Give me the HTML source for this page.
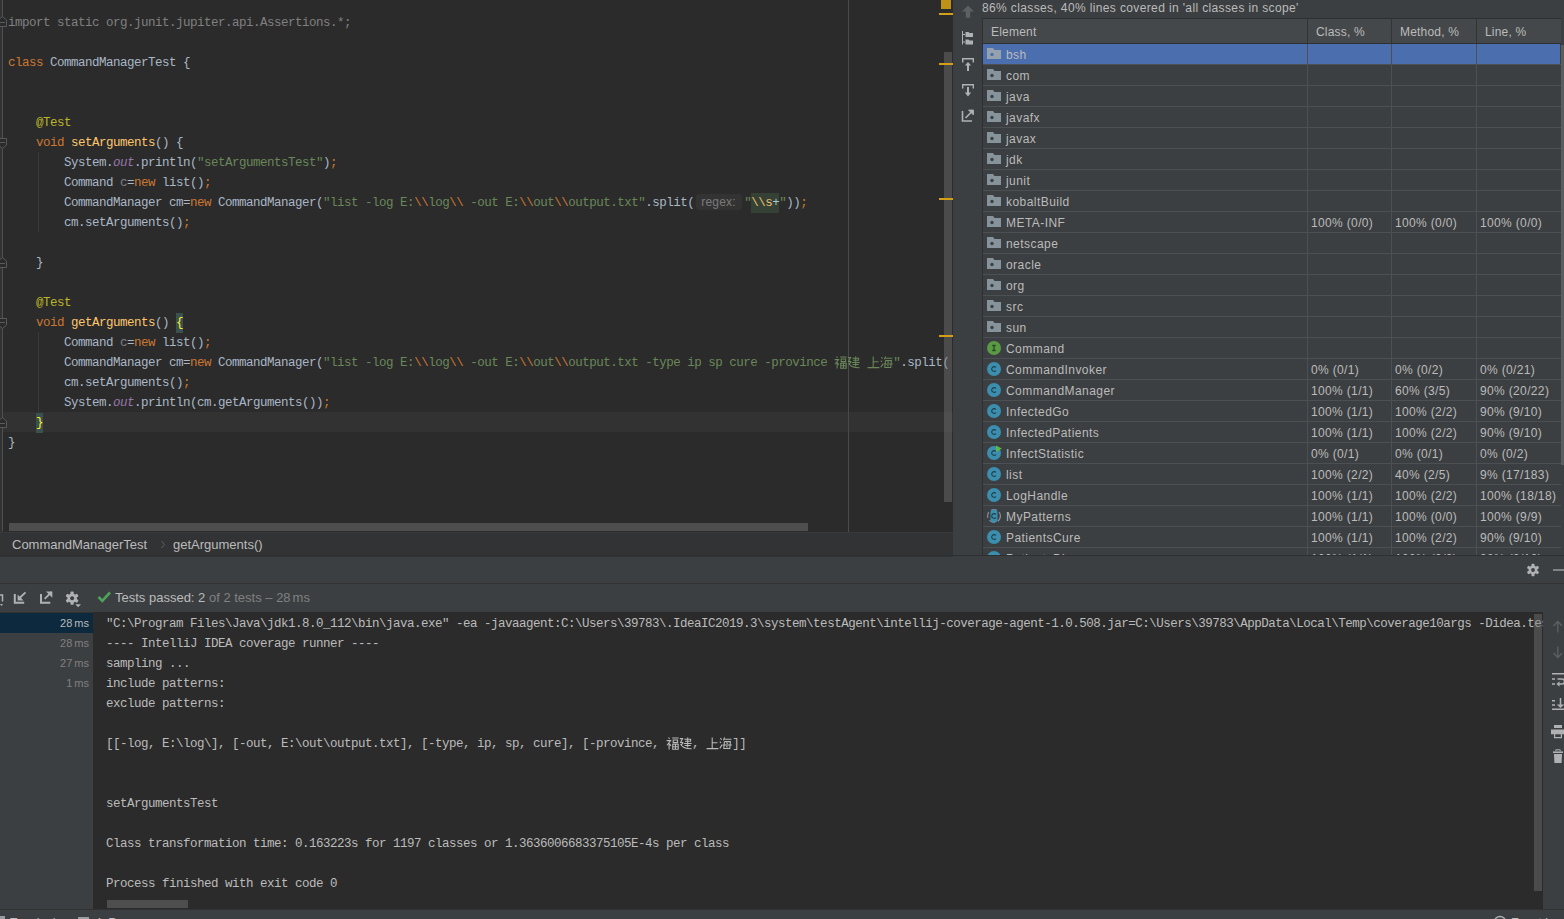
<!DOCTYPE html><html><head><meta charset="utf-8"><style>
*{margin:0;padding:0;box-sizing:border-box}
html,body{width:1564px;height:919px;overflow:hidden;background:#3C3F41;font-family:"Liberation Sans", sans-serif}
.abs{position:absolute}
.code{font-family:"Liberation Mono", monospace;font-size:12.5px;letter-spacing:-0.5px;line-height:20px;white-space:pre;color:#A9B7C6}
.ln{position:absolute;left:8px;height:20px}
.k{color:#CC7832} .s{color:#6A8759} .an{color:#BBB529} .fn{color:#FFC66D}
.st{color:#9876AA;font-style:italic} .gr{color:#808080} .uv{color:#808080}
.bm{background:#3B514D;color:#FFEF28;display:inline-block;height:20px;vertical-align:top}
.ui{font-family:"Liberation Sans", sans-serif;font-size:12px;line-height:14px;color:#BBBBBB;white-space:pre}
.num{letter-spacing:0.35px} .tb{letter-spacing:0.45px}
.cj{display:inline-block;width:13px;height:20px;vertical-align:top;position:relative}
.cj svg{position:absolute;left:0;top:3px}
.inl{display:inline-block;width:50px;height:20px;vertical-align:top;position:relative}
.inl b{position:absolute;left:2px;top:1px;width:46px;height:16px;border-radius:4px;background:#333333;font-weight:normal;font-family:"Liberation Sans", sans-serif;font-size:12px;line-height:16px;color:#7A7A7A;letter-spacing:0.2px;padding-left:5px}
.rx{background:#364135;display:inline-block;height:20px;vertical-align:top}
</style></head><body>
<div class="abs" style="left:0;top:0;width:953px;height:532px;background:#2B2B2B;overflow:hidden">
<div class="abs" style="left:0;top:0;width:3px;height:532px;background:#313335"></div>
<div class="abs" style="left:0;top:412px;width:953px;height:20px;background:#323232"></div>
<div class="abs" style="left:2px;top:0;width:1px;height:531px;background:#4F4F4F"></div>
<div class="abs" style="left:848px;top:0;width:1px;height:532px;background:#4A4A4A"></div>
<div class="abs" style="left:38px;top:152px;width:1px;height:80px;background:#393939"></div>
<div class="abs" style="left:38px;top:332px;width:1px;height:80px;background:#393939"></div>
<div class="ln code" style="top:13px"><span class="gr">import static org.junit.jupiter.api.Assertions.*;</span></div>
<div class="ln code" style="top:53px"><span class="k">class</span> CommandManagerTest {</div>
<div class="ln code" style="top:113px">    <span class="an">@Test</span></div>
<div class="ln code" style="top:133px">    <span class="k">void</span> <span class="fn">setArguments</span>() {</div>
<div class="ln code" style="top:153px">        System.<span class="st">out</span>.println(<span class="s">"setArgumentsTest"</span>)<span class="k">;</span></div>
<div class="ln code" style="top:173px">        Command <span class="uv">c</span>=<span class="k">new</span> list()<span class="k">;</span></div>
<div class="ln code" style="top:193px">        CommandManager cm=<span class="k">new</span> CommandManager(<span class="s">"list -log E:<span class="k">\\</span>log<span class="k">\\</span> -out E:<span class="k">\\</span>out<span class="k">\\</span>output.txt"</span>.split(<span class="inl"><b>regex:</b></span><span class="s">"</span><span class="rx"><span style="color:#E8BF6A">\\s</span><span style="color:#A9C7D6">+</span></span><span class="s">"</span>))<span class="k">;</span></div>
<div class="ln code" style="top:213px">        cm.setArguments()<span class="k">;</span></div>
<div class="ln code" style="top:253px">    }</div>
<div class="ln code" style="top:293px">    <span class="an">@Test</span></div>
<div class="ln code" style="top:313px">    <span class="k">void</span> <span class="fn">getArguments</span>() <span class="bm">{</span></div>
<div class="ln code" style="top:333px">        Command <span class="uv">c</span>=<span class="k">new</span> list()<span class="k">;</span></div>
<div class="ln code" style="top:353px">        CommandManager cm=<span class="k">new</span> CommandManager(<span class="s">"list -log E:<span class="k">\\</span>log<span class="k">\\</span> -out E:<span class="k">\\</span>out<span class="k">\\</span>output.txt -type ip sp cure -province <span class="cj"><svg width="13" height="13" viewBox="0 0 13 13"><path d="M2.5 0.5L3.6 1.8M0.6 3.6H4.6L1 8.2M3.1 5.8V12.6M3.6 7.2L5 8.8M6.2 1H12.6M7.2 3H11.6V5.6H7.2ZM6.7 7.2H12.2V12.2H6.7ZM9.45 7.2V12.2M6.7 9.7H12.2" fill="none" stroke="#6A8759" stroke-width="1.05"/></svg></span><span class="cj"><svg width="13" height="13" viewBox="0 0 13 13"><path d="M5.4 2.2H12.2M6 4.3H11.6V2.2M4.8 6.4H12.6M5.6 8.5H11.8M8.7 0.4V10.4M0.8 1.6H3.6L1.6 5.4H3.8L2.2 8.8M1.6 6.8Q3 11.6 12.6 11.8" fill="none" stroke="#6A8759" stroke-width="1.05"/></svg></span> <span class="cj"><svg width="13" height="13" viewBox="0 0 13 13"><path d="M6.2 0.6V11.6M6.2 5.8H11.4M0.6 11.6H12.4" fill="none" stroke="#6A8759" stroke-width="1.05"/></svg></span><span class="cj"><svg width="13" height="13" viewBox="0 0 13 13"><path d="M1.4 1.2L2.6 2.6M0.8 4.6L2 6M0.8 11.4L3.2 7.6M5.6 0.4L4.4 3.4M5 2.2H12.4M5.4 4.6H11.4L10.8 11.4H4.8L5.4 4.6M3.8 8H12.8M7.6 5.6L8.6 6.8M7.4 9L8.4 10.4" fill="none" stroke="#6A8759" stroke-width="1.05"/></svg></span>"</span>.split(</div>
<div class="ln code" style="top:373px">        cm.setArguments()<span class="k">;</span></div>
<div class="ln code" style="top:393px">        System.<span class="st">out</span>.println(cm.getArguments())<span class="k">;</span></div>
<div class="ln code" style="top:413px">    <span class="bm">}</span></div>
<div class="ln code" style="top:433px">}</div>
<svg class="abs" style="left:0;top:16px" width="9" height="12" viewBox="0 0 9 12"><path d="M-2 10.5H6.5V4L2.5 0.5L-2 4Z" fill="#2B2B2B" stroke="#5A5A5A" stroke-width="1"/><path d="M0 6.5H5" stroke="#5A5A5A" stroke-width="1"/></svg>
<svg class="abs" style="left:0;top:138px" width="9" height="12" viewBox="0 0 9 12"><path d="M-2 0.5H6.5V7L2.5 10.5L-2 7Z" fill="#2B2B2B" stroke="#5A5A5A" stroke-width="1"/><path d="M0 4.5H5" stroke="#5A5A5A" stroke-width="1"/></svg>
<svg class="abs" style="left:0;top:257px" width="9" height="12" viewBox="0 0 9 12"><path d="M-2 10.5H6.5V4L2.5 0.5L-2 4Z" fill="#2B2B2B" stroke="#5A5A5A" stroke-width="1"/><path d="M0 6.5H5" stroke="#5A5A5A" stroke-width="1"/></svg>
<svg class="abs" style="left:0;top:318px" width="9" height="12" viewBox="0 0 9 12"><path d="M-2 0.5H6.5V7L2.5 10.5L-2 7Z" fill="#2B2B2B" stroke="#5A5A5A" stroke-width="1"/><path d="M0 4.5H5" stroke="#5A5A5A" stroke-width="1"/></svg>
<svg class="abs" style="left:0;top:417px" width="9" height="12" viewBox="0 0 9 12"><path d="M-2 10.5H6.5V4L2.5 0.5L-2 4Z" fill="#2B2B2B" stroke="#5A5A5A" stroke-width="1"/><path d="M0 6.5H5" stroke="#5A5A5A" stroke-width="1"/></svg>
<div class="abs" style="left:944px;top:52px;width:8px;height:450px;background:rgba(120,120,120,0.42)"></div>
<div class="abs" style="left:9px;top:523px;width:799px;height:8px;background:#4E4E4E"></div>
<div class="abs" style="left:941px;top:0;width:10px;height:9px;background:#BE9117"></div>
<div class="abs" style="left:939px;top:13px;width:14px;height:2px;background:#D4A017"></div>
<div class="abs" style="left:939px;top:63px;width:14px;height:2px;background:#D4A017"></div>
<div class="abs" style="left:939px;top:198px;width:14px;height:2px;background:#D4A017"></div>
<div class="abs" style="left:939px;top:335px;width:14px;height:2px;background:#D4A017"></div>
</div>
<div class="abs" style="left:0;top:532px;width:953px;height:25px;background:#323335;border-top:1px solid #37393B">
<div class="abs ui" style="left:12px;top:4px;font-size:13px;line-height:15px">CommandManagerTest</div>
<svg class="abs" style="left:160px;top:7px" width="6" height="9" viewBox="0 0 6 9"><path d="M1.5 1L4.5 4.5L1.5 8" fill="none" stroke="#5E6060" stroke-width="1"/></svg>
<div class="abs ui" style="left:173px;top:4px;font-size:13px;line-height:15px">getArguments()</div>
</div>
<div class="abs" style="left:953px;top:0;width:611px;height:555px;background:#3C3F41;overflow:hidden">
<div class="abs ui" style="left:29px;top:1px;letter-spacing:0.37px">86% classes, 40% lines covered in 'all classes in scope'</div>
<svg class="abs" style="left:0;top:0" width="30" height="130" viewBox="953 0 30 130"><path d="M968 5.5L974 11.5H970.2V17.8H965.8V11.5H962Z" fill="#5D6062"/><path d="M962.5 31V44.5M962.5 34.5H965M962.5 42H965" stroke="#AFB1B3" stroke-width="1" fill="none"/><path d="M965.5 32H968.5L969.5 33H973V37H965.5Z M965.5 39.5H968.5L969.5 40.5H973V44.5H965.5Z" fill="#AFB1B3"/><path d="M962.7 62.5V58.7H973.3V62.5" stroke="#AFB1B3" stroke-width="1.4" fill="none"/><path d="M968 62L971.2 65.5H969V71H967V65.5H964.8Z" fill="#AFB1B3"/><path d="M962.7 88.5V84.7H973.3V88.5" stroke="#AFB1B3" stroke-width="1.4" fill="none"/><path d="M967 87H969V92.5H971.2L968 96.5L964.8 92.5H967Z" fill="#AFB1B3"/><path d="M962.5 111V121H972" stroke="#AFB1B3" stroke-width="1.6" fill="none"/><path d="M965.5 118L972 111.5" stroke="#AFB1B3" stroke-width="1.6"/><path d="M968.5 110H973.5V115Z" fill="#AFB1B3" stroke="#AFB1B3" stroke-width="0.8"/></svg>
<div class="abs" style="left:29px;top:18px;width:1px;height:540px;background:#2D2F30"></div>
<div class="abs" style="left:30px;top:18px;width:578px;height:1px;background:#2D2F30"></div>
<div class="abs" style="left:30px;top:19px;width:578px;height:24px;background:#45484A"></div>
<div class="abs" style="left:30px;top:43px;width:578px;height:1px;background:#2D2F30"></div>
<div class="abs ui" style="left:38px;top:25px;letter-spacing:0.2px">Element</div>
<div class="abs ui" style="left:363px;top:25px;letter-spacing:0.2px">Class, %</div>
<div class="abs ui" style="left:447px;top:25px;letter-spacing:0.2px">Method, %</div>
<div class="abs ui" style="left:532px;top:25px;letter-spacing:0.2px">Line, %</div>
<div class="abs" style="left:354px;top:19px;width:1px;height:24px;background:#323436"></div>
<div class="abs" style="left:438px;top:19px;width:1px;height:24px;background:#323436"></div>
<div class="abs" style="left:523px;top:19px;width:1px;height:24px;background:#323436"></div>
<div class="abs" style="left:30px;top:44px;width:577px;height:20px;background:#4B6EAF"></div>
<div class="abs" style="left:30px;top:64px;width:578px;height:1px;background:#4D5052"></div>
<svg class="abs" style="left:34px;top:48px" width="15" height="12" viewBox="0 0 15 12"><path d="M0 0H6L7.5 2H14V11H0Z" fill="#95A1AC"/><circle cx="5" cy="6.5" r="1.7" fill="#4B6EAF"/></svg>
<div class="abs ui tb" style="left:53px;top:48px">bsh</div>
<div class="abs" style="left:30px;top:85px;width:578px;height:1px;background:#4D5052"></div>
<svg class="abs" style="left:34px;top:69px" width="15" height="12" viewBox="0 0 15 12"><path d="M0 0H6L7.5 2H14V11H0Z" fill="#87939A"/><circle cx="5" cy="6.5" r="1.7" fill="#3C3F41"/></svg>
<div class="abs ui tb" style="left:53px;top:69px">com</div>
<div class="abs" style="left:30px;top:106px;width:578px;height:1px;background:#4D5052"></div>
<svg class="abs" style="left:34px;top:90px" width="15" height="12" viewBox="0 0 15 12"><path d="M0 0H6L7.5 2H14V11H0Z" fill="#87939A"/><circle cx="5" cy="6.5" r="1.7" fill="#3C3F41"/></svg>
<div class="abs ui tb" style="left:53px;top:90px">java</div>
<div class="abs" style="left:30px;top:127px;width:578px;height:1px;background:#4D5052"></div>
<svg class="abs" style="left:34px;top:111px" width="15" height="12" viewBox="0 0 15 12"><path d="M0 0H6L7.5 2H14V11H0Z" fill="#87939A"/><circle cx="5" cy="6.5" r="1.7" fill="#3C3F41"/></svg>
<div class="abs ui tb" style="left:53px;top:111px">javafx</div>
<div class="abs" style="left:30px;top:148px;width:578px;height:1px;background:#4D5052"></div>
<svg class="abs" style="left:34px;top:132px" width="15" height="12" viewBox="0 0 15 12"><path d="M0 0H6L7.5 2H14V11H0Z" fill="#87939A"/><circle cx="5" cy="6.5" r="1.7" fill="#3C3F41"/></svg>
<div class="abs ui tb" style="left:53px;top:132px">javax</div>
<div class="abs" style="left:30px;top:169px;width:578px;height:1px;background:#4D5052"></div>
<svg class="abs" style="left:34px;top:153px" width="15" height="12" viewBox="0 0 15 12"><path d="M0 0H6L7.5 2H14V11H0Z" fill="#87939A"/><circle cx="5" cy="6.5" r="1.7" fill="#3C3F41"/></svg>
<div class="abs ui tb" style="left:53px;top:153px">jdk</div>
<div class="abs" style="left:30px;top:190px;width:578px;height:1px;background:#4D5052"></div>
<svg class="abs" style="left:34px;top:174px" width="15" height="12" viewBox="0 0 15 12"><path d="M0 0H6L7.5 2H14V11H0Z" fill="#87939A"/><circle cx="5" cy="6.5" r="1.7" fill="#3C3F41"/></svg>
<div class="abs ui tb" style="left:53px;top:174px">junit</div>
<div class="abs" style="left:30px;top:211px;width:578px;height:1px;background:#4D5052"></div>
<svg class="abs" style="left:34px;top:195px" width="15" height="12" viewBox="0 0 15 12"><path d="M0 0H6L7.5 2H14V11H0Z" fill="#87939A"/><circle cx="5" cy="6.5" r="1.7" fill="#3C3F41"/></svg>
<div class="abs ui tb" style="left:53px;top:195px">kobaltBuild</div>
<div class="abs" style="left:30px;top:232px;width:578px;height:1px;background:#4D5052"></div>
<svg class="abs" style="left:34px;top:216px" width="15" height="12" viewBox="0 0 15 12"><path d="M0 0H6L7.5 2H14V11H0Z" fill="#87939A"/><circle cx="5" cy="6.5" r="1.7" fill="#3C3F41"/></svg>
<div class="abs ui tb" style="left:53px;top:216px">META-INF</div>
<div class="abs ui num" style="left:358px;top:216px">100% (0/0)</div>
<div class="abs ui num" style="left:442px;top:216px">100% (0/0)</div>
<div class="abs ui num" style="left:527px;top:216px">100% (0/0)</div>
<div class="abs" style="left:30px;top:253px;width:578px;height:1px;background:#4D5052"></div>
<svg class="abs" style="left:34px;top:237px" width="15" height="12" viewBox="0 0 15 12"><path d="M0 0H6L7.5 2H14V11H0Z" fill="#87939A"/><circle cx="5" cy="6.5" r="1.7" fill="#3C3F41"/></svg>
<div class="abs ui tb" style="left:53px;top:237px">netscape</div>
<div class="abs" style="left:30px;top:274px;width:578px;height:1px;background:#4D5052"></div>
<svg class="abs" style="left:34px;top:258px" width="15" height="12" viewBox="0 0 15 12"><path d="M0 0H6L7.5 2H14V11H0Z" fill="#87939A"/><circle cx="5" cy="6.5" r="1.7" fill="#3C3F41"/></svg>
<div class="abs ui tb" style="left:53px;top:258px">oracle</div>
<div class="abs" style="left:30px;top:295px;width:578px;height:1px;background:#4D5052"></div>
<svg class="abs" style="left:34px;top:279px" width="15" height="12" viewBox="0 0 15 12"><path d="M0 0H6L7.5 2H14V11H0Z" fill="#87939A"/><circle cx="5" cy="6.5" r="1.7" fill="#3C3F41"/></svg>
<div class="abs ui tb" style="left:53px;top:279px">org</div>
<div class="abs" style="left:30px;top:316px;width:578px;height:1px;background:#4D5052"></div>
<svg class="abs" style="left:34px;top:300px" width="15" height="12" viewBox="0 0 15 12"><path d="M0 0H6L7.5 2H14V11H0Z" fill="#87939A"/><circle cx="5" cy="6.5" r="1.7" fill="#3C3F41"/></svg>
<div class="abs ui tb" style="left:53px;top:300px">src</div>
<div class="abs" style="left:30px;top:337px;width:578px;height:1px;background:#4D5052"></div>
<svg class="abs" style="left:34px;top:321px" width="15" height="12" viewBox="0 0 15 12"><path d="M0 0H6L7.5 2H14V11H0Z" fill="#87939A"/><circle cx="5" cy="6.5" r="1.7" fill="#3C3F41"/></svg>
<div class="abs ui tb" style="left:53px;top:321px">sun</div>
<div class="abs" style="left:30px;top:358px;width:578px;height:1px;background:#4D5052"></div>
<svg class="abs" style="left:34px;top:341px" width="14" height="14" viewBox="0 0 14 14"><circle cx="7" cy="7" r="7" fill="#5A9A45"/><path d="M5.2 4.5H8.8M7 4.5V9.5M5.2 9.5H8.8" stroke="#2A4A22" stroke-width="1.3"/></svg>
<div class="abs ui tb" style="left:53px;top:342px">Command</div>
<div class="abs" style="left:30px;top:379px;width:578px;height:1px;background:#4D5052"></div>
<svg class="abs" style="left:34px;top:361px;overflow:visible" width="16" height="15" viewBox="0 -1 16 15"><circle cx="7" cy="7" r="7" fill="#3B8EAE"/><path d="M8.9 5.4A2.4 2.4 0 1 0 8.9 8.6" fill="none" stroke="#233C48" stroke-width="1.1"/></svg>
<div class="abs ui tb" style="left:53px;top:363px">CommandInvoker</div>
<div class="abs ui num" style="left:358px;top:363px">0% (0/1)</div>
<div class="abs ui num" style="left:442px;top:363px">0% (0/2)</div>
<div class="abs ui num" style="left:527px;top:363px">0% (0/21)</div>
<div class="abs" style="left:30px;top:400px;width:578px;height:1px;background:#4D5052"></div>
<svg class="abs" style="left:34px;top:382px;overflow:visible" width="16" height="15" viewBox="0 -1 16 15"><circle cx="7" cy="7" r="7" fill="#3B8EAE"/><path d="M8.9 5.4A2.4 2.4 0 1 0 8.9 8.6" fill="none" stroke="#233C48" stroke-width="1.1"/></svg>
<div class="abs ui tb" style="left:53px;top:384px">CommandManager</div>
<div class="abs ui num" style="left:358px;top:384px">100% (1/1)</div>
<div class="abs ui num" style="left:442px;top:384px">60% (3/5)</div>
<div class="abs ui num" style="left:527px;top:384px">90% (20/22)</div>
<div class="abs" style="left:30px;top:421px;width:578px;height:1px;background:#4D5052"></div>
<svg class="abs" style="left:34px;top:403px;overflow:visible" width="16" height="15" viewBox="0 -1 16 15"><circle cx="7" cy="7" r="7" fill="#3B8EAE"/><path d="M8.9 5.4A2.4 2.4 0 1 0 8.9 8.6" fill="none" stroke="#233C48" stroke-width="1.1"/></svg>
<div class="abs ui tb" style="left:53px;top:405px">InfectedGo</div>
<div class="abs ui num" style="left:358px;top:405px">100% (1/1)</div>
<div class="abs ui num" style="left:442px;top:405px">100% (2/2)</div>
<div class="abs ui num" style="left:527px;top:405px">90% (9/10)</div>
<div class="abs" style="left:30px;top:442px;width:578px;height:1px;background:#4D5052"></div>
<svg class="abs" style="left:34px;top:424px;overflow:visible" width="16" height="15" viewBox="0 -1 16 15"><circle cx="7" cy="7" r="7" fill="#3B8EAE"/><path d="M8.9 5.4A2.4 2.4 0 1 0 8.9 8.6" fill="none" stroke="#233C48" stroke-width="1.1"/></svg>
<div class="abs ui tb" style="left:53px;top:426px">InfectedPatients</div>
<div class="abs ui num" style="left:358px;top:426px">100% (1/1)</div>
<div class="abs ui num" style="left:442px;top:426px">100% (2/2)</div>
<div class="abs ui num" style="left:527px;top:426px">90% (9/10)</div>
<div class="abs" style="left:30px;top:463px;width:578px;height:1px;background:#4D5052"></div>
<svg class="abs" style="left:34px;top:445px;overflow:visible" width="16" height="15" viewBox="0 -1 16 15"><circle cx="7" cy="7" r="7" fill="#3B8EAE"/><path d="M8.9 5.4A2.4 2.4 0 1 0 8.9 8.6" fill="none" stroke="#233C48" stroke-width="1.1"/><path d="M9 -0.5V6L14.8 2.6Z" fill="#5BB744"/></svg>
<div class="abs ui tb" style="left:53px;top:447px">InfectStatistic</div>
<div class="abs ui num" style="left:358px;top:447px">0% (0/1)</div>
<div class="abs ui num" style="left:442px;top:447px">0% (0/1)</div>
<div class="abs ui num" style="left:527px;top:447px">0% (0/2)</div>
<div class="abs" style="left:30px;top:484px;width:578px;height:1px;background:#4D5052"></div>
<svg class="abs" style="left:34px;top:466px;overflow:visible" width="16" height="15" viewBox="0 -1 16 15"><circle cx="7" cy="7" r="7" fill="#3B8EAE"/><path d="M8.9 5.4A2.4 2.4 0 1 0 8.9 8.6" fill="none" stroke="#233C48" stroke-width="1.1"/></svg>
<div class="abs ui tb" style="left:53px;top:468px">list</div>
<div class="abs ui num" style="left:358px;top:468px">100% (2/2)</div>
<div class="abs ui num" style="left:442px;top:468px">40% (2/5)</div>
<div class="abs ui num" style="left:527px;top:468px">9% (17/183)</div>
<div class="abs" style="left:30px;top:505px;width:578px;height:1px;background:#4D5052"></div>
<svg class="abs" style="left:34px;top:487px;overflow:visible" width="16" height="15" viewBox="0 -1 16 15"><circle cx="7" cy="7" r="7" fill="#3B8EAE"/><path d="M8.9 5.4A2.4 2.4 0 1 0 8.9 8.6" fill="none" stroke="#233C48" stroke-width="1.1"/></svg>
<div class="abs ui tb" style="left:53px;top:489px">LogHandle</div>
<div class="abs ui num" style="left:358px;top:489px">100% (1/1)</div>
<div class="abs ui num" style="left:442px;top:489px">100% (2/2)</div>
<div class="abs ui num" style="left:527px;top:489px">100% (18/18)</div>
<div class="abs" style="left:30px;top:526px;width:578px;height:1px;background:#4D5052"></div>
<svg class="abs" style="left:34px;top:508px;overflow:visible" width="16" height="15" viewBox="0 -1 16 15"><circle cx="7" cy="7" r="6.4" fill="none" stroke="#8C8E90" stroke-width="1.2" stroke-dasharray="6 2.8"/><rect x="3.5" y="0.5" width="7" height="13" rx="3" fill="#3B8EAE"/><path d="M8.9 5.4A2.4 2.4 0 1 0 8.9 8.6" fill="none" stroke="#233C48" stroke-width="1.1"/></svg>
<div class="abs ui tb" style="left:53px;top:510px">MyPatterns</div>
<div class="abs ui num" style="left:358px;top:510px">100% (1/1)</div>
<div class="abs ui num" style="left:442px;top:510px">100% (0/0)</div>
<div class="abs ui num" style="left:527px;top:510px">100% (9/9)</div>
<div class="abs" style="left:30px;top:547px;width:578px;height:1px;background:#4D5052"></div>
<svg class="abs" style="left:34px;top:529px;overflow:visible" width="16" height="15" viewBox="0 -1 16 15"><circle cx="7" cy="7" r="7" fill="#3B8EAE"/><path d="M8.9 5.4A2.4 2.4 0 1 0 8.9 8.6" fill="none" stroke="#233C48" stroke-width="1.1"/></svg>
<div class="abs ui tb" style="left:53px;top:531px">PatientsCure</div>
<div class="abs ui num" style="left:358px;top:531px">100% (1/1)</div>
<div class="abs ui num" style="left:442px;top:531px">100% (2/2)</div>
<div class="abs ui num" style="left:527px;top:531px">90% (9/10)</div>
<div class="abs" style="left:30px;top:568px;width:578px;height:1px;background:#4D5052"></div>
<svg class="abs" style="left:34px;top:550px;overflow:visible" width="16" height="15" viewBox="0 -1 16 15"><circle cx="7" cy="7" r="7" fill="#3B8EAE"/><path d="M8.9 5.4A2.4 2.4 0 1 0 8.9 8.6" fill="none" stroke="#233C48" stroke-width="1.1"/></svg>
<div class="abs ui tb" style="left:53px;top:552px">PatientsDie</div>
<div class="abs ui num" style="left:358px;top:552px">100% (1/1)</div>
<div class="abs ui num" style="left:442px;top:552px">100% (2/2)</div>
<div class="abs ui num" style="left:527px;top:552px">90% (9/10)</div>
<div class="abs" style="left:354px;top:44px;width:1px;height:512px;background:#4D5052"></div>
<div class="abs" style="left:438px;top:44px;width:1px;height:512px;background:#4D5052"></div>
<div class="abs" style="left:523px;top:44px;width:1px;height:512px;background:#4D5052"></div>
<div class="abs" style="left:608px;top:45px;width:3px;height:420px;background:#5A5D5F"></div>
</div>
<div class="abs" style="left:0;top:555px;width:1564px;height:1px;background:#2D2F30"></div>
<svg class="abs" style="left:1524px;top:561px" width="40" height="18" viewBox="1524 561 40 18"><g transform="translate(1533 570)"><circle r="4.4" fill="#AFB1B3"/><rect x="-1.5" y="-6.3" width="3" height="12.6" rx="0.8" fill="#AFB1B3"/><rect x="-1.5" y="-6.3" width="3" height="12.6" rx="0.8" fill="#AFB1B3" transform="rotate(60)"/><rect x="-1.5" y="-6.3" width="3" height="12.6" rx="0.8" fill="#AFB1B3" transform="rotate(120)"/><circle r="1.9" fill="#3C3F41"/></g><path d="M1553 570H1564" stroke="#AFB1B3" stroke-width="1.2"/></svg>
<div class="abs" style="left:0;top:583px;width:1564px;height:1px;background:#323232"></div>
<svg class="abs" style="left:0;top:584px" width="115" height="28" viewBox="0 584 115 28"><path d="M-3 595H2.5V601.5" fill="none" stroke="#AFB1B3" stroke-width="1.5"/><path d="M0 604H3L1.5 606Z" fill="#AFB1B3"/><path d="M14.8 594V602.8H24.2" fill="none" stroke="#AFB1B3" stroke-width="2"/><path d="M18.5 599L25.5 592.3" stroke="#AFB1B3" stroke-width="1.8"/><path d="M17.6 594.5V600.4H23.5Z" fill="#AFB1B3"/><path d="M41 594V602.8H50.3" fill="none" stroke="#AFB1B3" stroke-width="2"/><path d="M44.6 598.8L51.6 592" stroke="#AFB1B3" stroke-width="1.8"/><path d="M46 591.5H52.3V597.8Z" fill="#AFB1B3"/><g transform="translate(72.1 598.2)"><circle r="4.7" fill="#AFB1B3"/><rect x="-1.6" y="-6.6" width="3.2" height="13.2" rx="0.8" fill="#AFB1B3"/><rect x="-1.6" y="-6.6" width="3.2" height="13.2" rx="0.8" fill="#AFB1B3" transform="rotate(60)"/><rect x="-1.6" y="-6.6" width="3.2" height="13.2" rx="0.8" fill="#AFB1B3" transform="rotate(120)"/><circle r="2" fill="#3C3F41"/></g><path d="M73.8 603.2H82.5L78.2 608.2Z" fill="#3C3F41"/><path d="M75.3 604.3H81L78.15 607.3Z" fill="#AFB1B3"/><path d="M98.5 597L102.3 600.8L110 592.5" fill="none" stroke="#4EA25A" stroke-width="2.6"/></svg>
<div class="abs ui" style="left:115px;top:590px;font-size:13px;line-height:15px">Tests passed: 2<span style="color:#808080"> of 2 tests – 28<span style="margin-left:2px">ms</span></span></div>
<div class="abs" style="left:0;top:612px;width:93px;height:297px;background:#3C3F41"></div>
<div class="abs" style="left:0;top:613px;width:93px;height:20px;background:#0D293E"></div>
<div class="abs" style="left:0;top:612px;width:93px;height:1px;background:#323232"></div>
<div class="abs ui" style="right:1475px;top:617px;color:#BBBBBB;font-size:11px;line-height:13px">28<span style="margin-left:2px">ms</span></div>
<div class="abs ui" style="right:1475px;top:637px;color:#808080;font-size:11px;line-height:13px">28<span style="margin-left:2px">ms</span></div>
<div class="abs ui" style="right:1475px;top:657px;color:#808080;font-size:11px;line-height:13px">27<span style="margin-left:2px">ms</span></div>
<div class="abs ui" style="right:1475px;top:677px;color:#808080;font-size:11px;line-height:13px">1<span style="margin-left:2px">ms</span></div>
<div class="abs" style="left:93px;top:612px;width:1450px;height:297px;background:#2B2B2B;overflow:hidden">
<div class="abs code" style="left:13px;top:2px;color:#BBBBBB">"C:\Program Files\Java\jdk1.8.0_112\bin\java.exe" -ea -javaagent:C:\Users\39783\.IdeaIC2019.3\system\testAgent\intellij-coverage-agent-1.0.508.jar=C:\Users\39783\AppData\Local\Temp\coverage10args -Didea.test.cyclic.buffer.size=1048576</div>
<div class="abs code" style="left:13px;top:22px;color:#BBBBBB">---- IntelliJ IDEA coverage runner ----</div>
<div class="abs code" style="left:13px;top:42px;color:#BBBBBB">sampling ...</div>
<div class="abs code" style="left:13px;top:62px;color:#BBBBBB">include patterns:</div>
<div class="abs code" style="left:13px;top:82px;color:#BBBBBB">exclude patterns:</div>
<div class="abs code" style="left:13px;top:122px;color:#BBBBBB">[[-log, E:\log\], [-out, E:\out\output.txt], [-type, ip, sp, cure], [-province, <span class="cj"><svg width="13" height="13" viewBox="0 0 13 13"><path d="M2.5 0.5L3.6 1.8M0.6 3.6H4.6L1 8.2M3.1 5.8V12.6M3.6 7.2L5 8.8M6.2 1H12.6M7.2 3H11.6V5.6H7.2ZM6.7 7.2H12.2V12.2H6.7ZM9.45 7.2V12.2M6.7 9.7H12.2" fill="none" stroke="#BBBBBB" stroke-width="1.05"/></svg></span><span class="cj"><svg width="13" height="13" viewBox="0 0 13 13"><path d="M5.4 2.2H12.2M6 4.3H11.6V2.2M4.8 6.4H12.6M5.6 8.5H11.8M8.7 0.4V10.4M0.8 1.6H3.6L1.6 5.4H3.8L2.2 8.8M1.6 6.8Q3 11.6 12.6 11.8" fill="none" stroke="#BBBBBB" stroke-width="1.05"/></svg></span>, <span class="cj"><svg width="13" height="13" viewBox="0 0 13 13"><path d="M6.2 0.6V11.6M6.2 5.8H11.4M0.6 11.6H12.4" fill="none" stroke="#BBBBBB" stroke-width="1.05"/></svg></span><span class="cj"><svg width="13" height="13" viewBox="0 0 13 13"><path d="M1.4 1.2L2.6 2.6M0.8 4.6L2 6M0.8 11.4L3.2 7.6M5.6 0.4L4.4 3.4M5 2.2H12.4M5.4 4.6H11.4L10.8 11.4H4.8L5.4 4.6M3.8 8H12.8M7.6 5.6L8.6 6.8M7.4 9L8.4 10.4" fill="none" stroke="#BBBBBB" stroke-width="1.05"/></svg></span>]]</div>
<div class="abs code" style="left:13px;top:182px;color:#BBBBBB">setArgumentsTest</div>
<div class="abs code" style="left:13px;top:222px;color:#BBBBBB">Class transformation time: 0.163223s for 1197 classes or 1.3636006683375105E-4s per class</div>
<div class="abs code" style="left:13px;top:262px;color:#BBBBBB">Process finished with exit code 0</div>
<div class="abs" style="left:1441px;top:2px;width:8px;height:277px;background:rgba(120,120,120,0.42)"></div>
<div class="abs" style="left:14px;top:288px;width:81px;height:8px;background:#4E4E4E"></div>
</div>
<svg class="abs" style="left:1543px;top:612px" width="21" height="160" viewBox="1543 612 21 160"><path d="M1557.8 621.5V632.5M1553.5 626L1557.8 621.5L1562.1 626" fill="none" stroke="#5D6062" stroke-width="1.3"/><path d="M1557.8 646.5V657.5M1553.5 653L1557.8 657.5L1562.1 653" fill="none" stroke="#5D6062" stroke-width="1.3"/><path d="M1552 673.8H1564M1552 679H1555M1552 684H1555M1557.5 679H1562A2.5 2.5 0 0 1 1562 684H1559" fill="none" stroke="#AFB1B3" stroke-width="1.5"/><path d="M1556.5 684L1559.5 681.2V686.8Z" fill="#AFB1B3"/><path d="M1552 700.7H1555M1552 705H1555M1552 709.3H1564M1560.5 698V705" fill="none" stroke="#AFB1B3" stroke-width="1.5"/><path d="M1556.8 704.5L1560.5 708L1564.2 704.5Z" fill="#AFB1B3"/><path d="M1554 725H1562V728H1554Z M1551 729.5H1564V734.2H1551Z" fill="#AFB1B3"/><path d="M1554.6 734V737.6H1561.4V734" fill="none" stroke="#AFB1B3" stroke-width="1.2"/><path d="M1553 752.2H1563" stroke="#AFB1B3" stroke-width="1.6"/><path d="M1555.8 751V749.8H1560.2V751" fill="none" stroke="#AFB1B3" stroke-width="1"/><path d="M1554 754H1562L1561.6 763H1554.4Z" fill="#AFB1B3"/></svg>
<div class="abs" style="left:0;top:909px;width:1564px;height:1px;background:#323232"></div>
<div class="abs" style="left:0;top:916px;width:5px;height:3px;background:#9A9C9E"></div>
<div class="abs" style="left:78px;top:917px;width:11px;height:2px;background:#9A9C9E"></div>
<div class="abs ui" style="left:10px;top:916px">Terminal</div>
<div class="abs ui" style="left:95px;top:916px">4: Run</div>
<svg class="abs" style="left:1492px;top:913px" width="16" height="6"><circle cx="8" cy="9" r="5.5" fill="none" stroke="#AFB1B3" stroke-width="1.4"/></svg>
<div class="abs ui" style="left:1511px;top:916px">Event Log</div>
</body></html>
